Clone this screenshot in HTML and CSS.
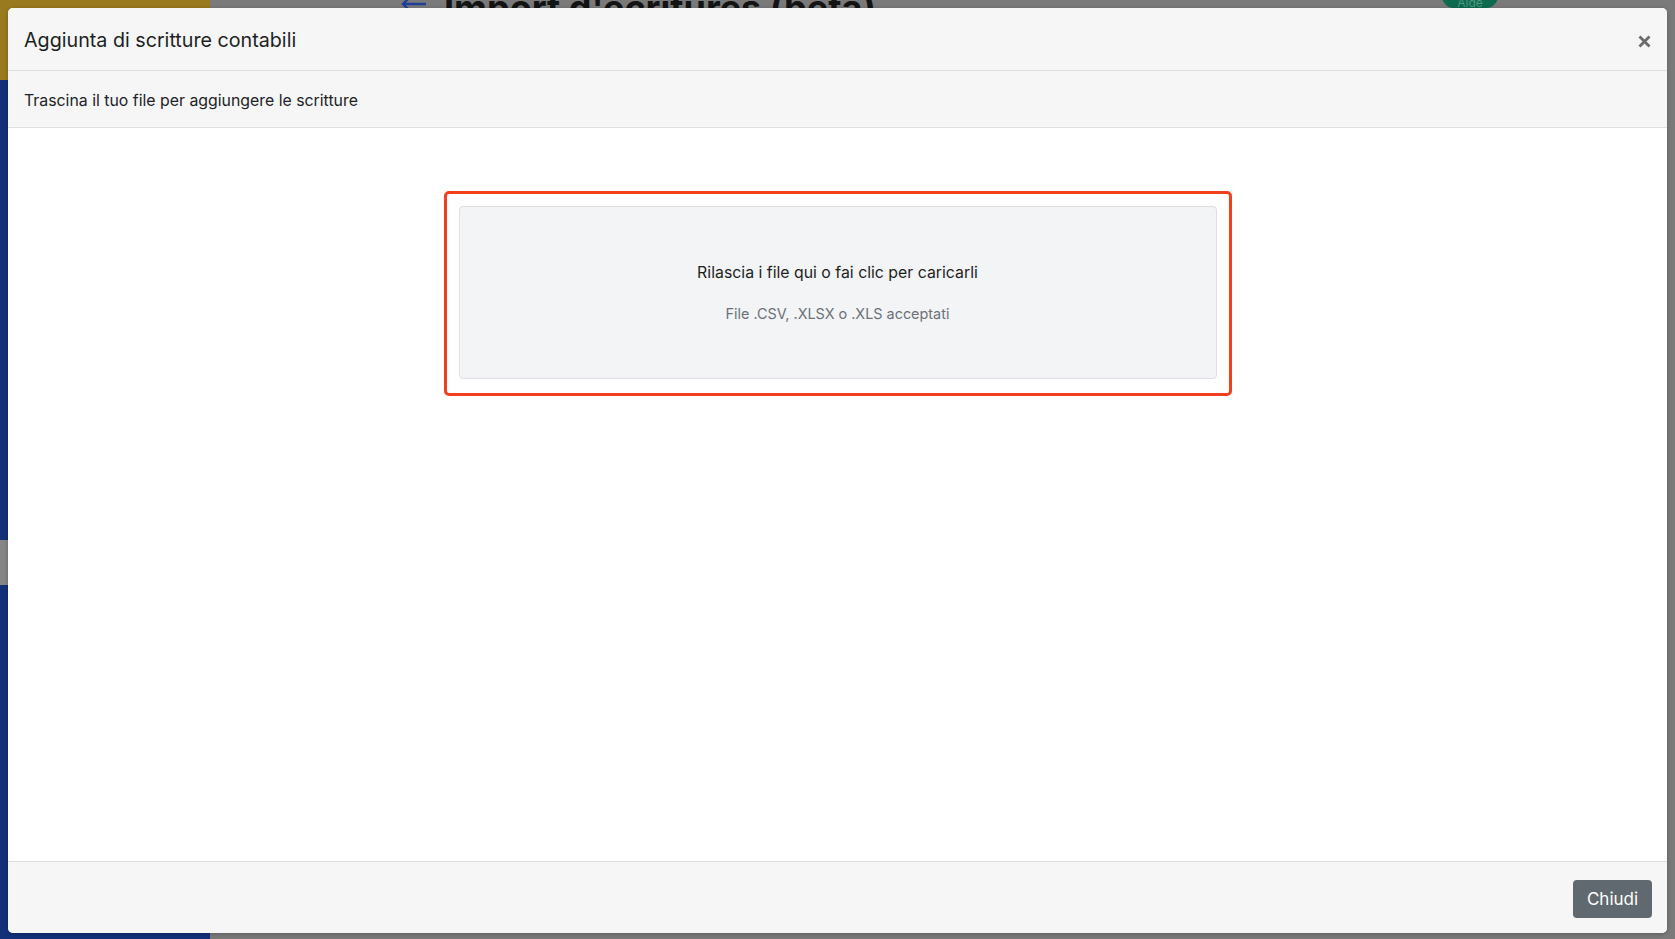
FILE: index.html
```html
<!DOCTYPE html>
<html lang="it">
<head>
<meta charset="utf-8">
<title>Aggiunta di scritture contabili</title>
<link rel="stylesheet" href="styles.css">
</head>
<body>
<div class="page">
  <aside class="sidebar">
    <div class="sidebar-brand"><span class="brand-text">1035 Lavoratori contabile</span></div>
    <div class="sidebar-nav">
      <div class="nav-spacer"></div>
      <div class="nav-active"></div>
    </div>
  </aside>
  <main class="main">
    <header class="main-header">
      <svg class="back-arrow" width="28" height="20" viewBox="0 0 28 20"><path d="M26 10H3M11 2L3 10l8 8" fill="none" stroke="#1f3f9a" stroke-width="2.4"/></svg>
      <h1 class="main-title">Import d'écritures (beta)</h1>
      <span class="pill">Aide</span>
    </header>
  </main>
</div>

<div class="modal">
  <div class="modal-header">
    <h2 class="modal-title">Aggiunta di scritture contabili</h2>
    <button class="close" aria-label="Chiudi">
      <svg width="13" height="13" viewBox="0 0 13 13"><path d="M1.5 1.5l10 10M11.5 1.5l-10 10" stroke="#6b6b6b" stroke-width="2.8" stroke-linecap="butt"/></svg>
    </button>
  </div>
  <div class="modal-sub">Trascina il tuo file per aggiungere le scritture</div>
  <div class="modal-body">
    <div class="highlight">
      <div class="dropzone">
        <div class="dz-main">Rilascia i file qui o fai clic per caricarli</div>
        <div class="dz-hint">File .CSV, .XLSX o .XLS acceptati</div>
      </div>
    </div>
  </div>
  <div class="modal-footer">
    <button class="btn-close">Chiudi</button>
  </div>
</div>
</body>
</html>
```

FILE: styles.css
```css
* { box-sizing: border-box; }
html, body { margin: 0; padding: 0; }
body {
  width: 1675px;
  height: 939px;
  overflow: hidden;
  font-family: Inter, "Noto Sans", "Liberation Sans", sans-serif;
  color: #212529;
  position: relative;
  background: #7a7a7a;
}
.page {
  display: flex;
  height: 939px;
}
.sidebar {
  width: 210px;
  display: flex;
  flex-direction: column;
  background: #12307a;
}
.sidebar-brand {
  height: 80px;
  background: #9a7a1f;
  padding: 3px 14px;
}
.brand-text {
  font-size: 13px;
  line-height: 16px;
  color: #c9b373;
}
.sidebar-nav {
  flex: 1;
  display: flex;
  flex-direction: column;
}
.nav-spacer { height: 460px; }
.nav-active { height: 45px; background: #868686; }
.main {
  flex: 1;
  background: #7a7a7a;
}
.main-header {
  display: flex;
  align-items: flex-start;
  height: 40px;
  padding-left: 190px;
}
.back-arrow { margin-top: -6px; }
.main-title {
  margin: -12px 0 0 16px;
  font-size: 36px;
  font-weight: 700;
  color: #141414;
  line-height: 40px;
}
.pill {
  margin: -22px 0 0 auto;
  margin-right: 177px;
  width: 56px;
  height: 30px;
  border-radius: 12px;
  background: #0d6b50;
  color: #4f977f;
  font-size: 12px;
  text-align: center;
  line-height: 50px;
}

.modal {
  position: absolute;
  top: 8px;
  left: 8px;
  width: 1659px;
  height: 925px;
  background: #fff;
  border-radius: 5px;
  display: flex;
  flex-direction: column;
  overflow: hidden;
  box-shadow: 0 1px 4px rgba(0,0,0,0.25);
}
.modal-header {
  display: flex;
  align-items: center;
  justify-content: space-between;
  height: 63px;
  padding: 0 16px 0 16px;
  background: #f6f6f7;
  border-bottom: 1px solid #dedfe3;
}
.modal-title {
  margin: 0;
  font-size: 19.7px;
  font-weight: 400;
  color: #1d1f22;
  padding-top: 2px;
}
.close {
  border: 0;
  background: transparent;
  padding: 0;
  margin-right: 0;
  display: flex;
  margin-top: 4px;
}
.modal-sub {
  height: 57px;
  display: flex;
  align-items: center;
  padding: 2px 16px 0 16px;
  background: #f6f6f7;
  border-bottom: 1px solid #dedfe3;
  font-size: 15.85px;
  color: #212326;
}
.modal-body {
  flex: 1;
  display: flex;
  justify-content: center;
  align-items: flex-start;
  padding-top: 63px;
}
.highlight {
  width: 788px;
  border: 3px solid #f2401e;
  border-radius: 5px;
  padding: 12px 12px 14px;
}
.dropzone {
  height: 173px;
  background: #f3f4f6;
  border: 1px solid #dddfe3;
  border-radius: 4px;
  display: flex;
  flex-direction: column;
  align-items: center;
  justify-content: center;
  gap: 19px;
  padding-bottom: 1px;
}
.dz-main {
  font-size: 15.85px;
  line-height: 24px;
  color: #1d1f22;
}
.dz-hint {
  font-size: 14.4px;
  line-height: 20px;
  color: #6c7178;
}
.modal-footer {
  height: 72px;
  display: flex;
  justify-content: flex-end;
  align-items: center;
  padding: 0 15px;
  background: #f6f6f7;
  border-top: 1px solid #dedfe3;
}
.btn-close {
  width: 79px;
  height: 38px;
  border: 0;
  border-radius: 4px;
  background: #616970;
  color: #fff;
  font-family: Inter, "Noto Sans", "Liberation Sans", sans-serif;
  font-size: 17px;
  margin-top: 2px;
}
```
